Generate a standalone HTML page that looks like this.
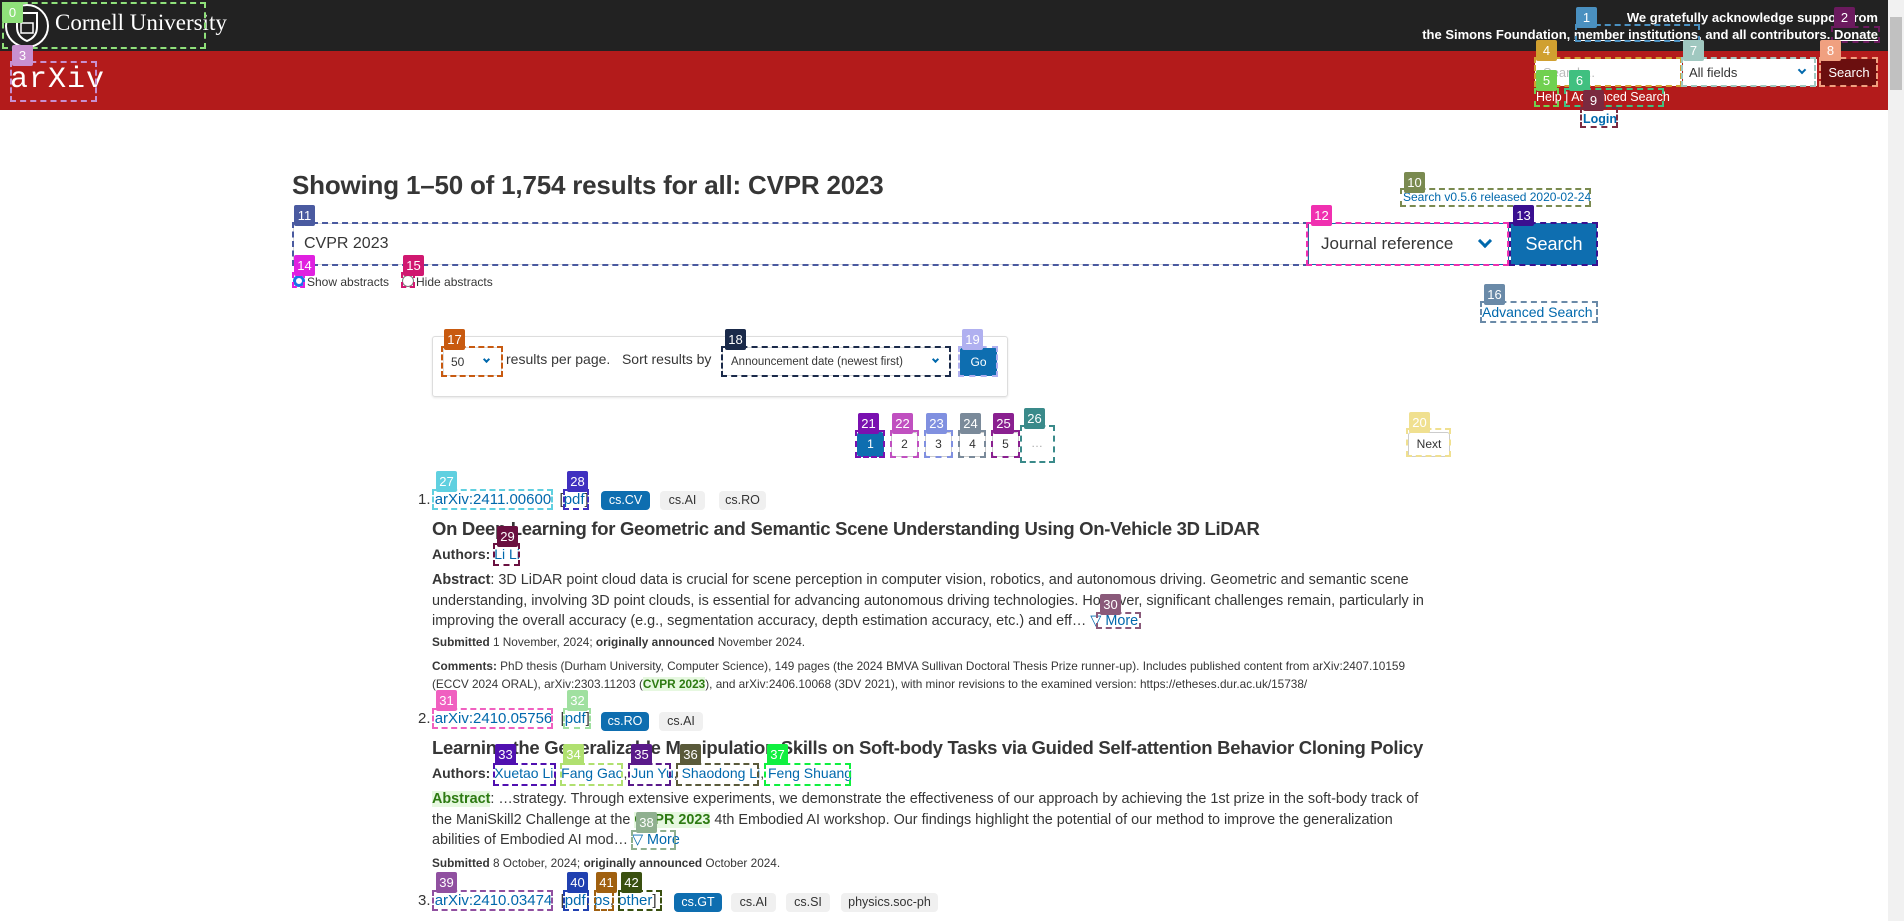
<!DOCTYPE html>
<html><head><meta charset="utf-8"><style>
*{margin:0;padding:0;box-sizing:border-box}
body{width:1904px;height:921px;overflow:hidden;position:relative;background:#fff;font-family:"Liberation Sans",Arial,sans-serif;color:#363636}
.a{position:absolute;white-space:nowrap}
.lk{color:#0068ac}
.b{position:absolute;border:2px dashed}
.l{position:absolute;width:21px;height:21px;color:#fff;font-size:13px;text-align:center;line-height:21px;border-radius:2px}
.tag{position:absolute;height:19px;border-radius:4px;font-size:12.5px;line-height:19px;text-align:center;background:#f0f0f0;color:#333}
.tag.p{background:#0e6eb0;color:#fff}
.pg{position:absolute;top:432px;height:25px;border:1px solid #ccc;border-radius:3px;font-size:12px;text-align:center;line-height:23px;color:#333;background:#fff}
.hl{background:#e6f8e0;color:#2d7a12;font-weight:bold}
.chev{position:absolute;display:inline-block;width:6px;height:6px;border-right:2px solid #0068ac;border-bottom:2px solid #0068ac;transform:rotate(45deg)}
</style></head><body>
<!-- header -->
<div class="a" style="left:0;top:0;width:1888px;height:51px;background:#222"></div>
<div class="a" style="left:0;top:51px;width:1888px;height:59px;background:#b31b1b"></div>
<svg class="a" style="left:4px;top:3px" width="46" height="46" viewBox="0 0 46 46"><circle cx="23" cy="23" r="21" fill="none" stroke="#fff" stroke-width="2"/><path d="M13 10h20v14c0 8-5 12-10 14-5-2-10-6-10-14z" fill="none" stroke="#fff" stroke-width="2"/><rect x="17" y="20" width="12" height="10" fill="none" stroke="#fff" stroke-width="1.5"/></svg>
<div class="a" style="left:55px;top:10px;font-family:'Liberation Serif',serif;font-size:23px;color:#fff">Cornell University</div>
<div class="a" style="left:10px;top:63px;font-family:'Liberation Mono',monospace;font-size:30px;color:#fff;letter-spacing:1px">arXiv</div>
<div class="a" style="right:26px;top:9px;font-size:13px;font-weight:bold;color:#fff;text-align:right;line-height:17px">We gratefully acknowledge support from<br>the Simons Foundation, <u>member institutions</u>, and all contributors. <u>Donate</u></div>
<div class="a" style="left:1535px;top:59px;width:147px;height:27px;background:#fff;border-radius:2px;font-size:13px;color:#bbb;padding:6px 8px">Search...</div>
<div class="a" style="left:1683px;top:59px;width:134px;height:27px;background:#fff;font-size:13px;color:#333;padding:6px 6px">All fields<span class="chev" style="right:12px;top:8px"></span></div>
<div class="a" style="left:1821px;top:59px;width:56px;height:27px;background:#6b0f0f;color:#fff;font-size:13px;text-align:center;line-height:27px">Search</div>
<div class="a" style="left:1536px;top:90px;font-size:12.5px;color:#fff">Help | Advanced Search</div>
<div class="a lk" style="left:1583px;top:112px;font-size:12.5px;font-weight:bold">Login</div>
<!-- scrollbar -->
<div class="a" style="left:1888px;top:0;width:16px;height:921px;background:#f1f1f1"></div>
<div class="a" style="left:1890px;top:17px;width:12px;height:73px;background:#c1c1c1"></div>
<!-- heading -->
<div class="a" style="left:292px;top:170px;font-size:26px;font-weight:bold;color:#363636;letter-spacing:-0.2px">Showing 1–50 of 1,754 results for all: CVPR 2023</div>
<div class="a lk" style="left:1403px;top:190px;font-size:12px">Search v0.5.6 released 2020-02-24</div>
<div class="a" style="left:293px;top:223px;width:1015px;height:42px;border:1px solid #dbdbdb;font-size:16px;padding:11px 10px;color:#363636">CVPR 2023</div>
<div class="a" style="left:1308px;top:223px;width:201px;height:42px;border:1px solid #0e6eb0;font-size:17px;padding:10px 12px">Journal reference<span class="chev" style="right:18px;top:12px;width:10px;height:10px;border-width:3px"></span></div>
<div class="a" style="left:1511px;top:223px;width:86px;height:42px;background:#0e6eb0;color:#fff;font-size:18px;text-align:center;line-height:42px">Search</div>
<div class="a" style="left:293px;top:275px;width:12px;height:12px;border-radius:50%;border:3px solid #1a73e8;background:#fff"></div>
<div class="a" style="left:307px;top:275px;font-size:12px">Show abstracts</div>
<div class="a" style="left:402px;top:275px;width:12px;height:12px;border-radius:50%;border:1px solid #777"></div>
<div class="a" style="left:416px;top:275px;font-size:12px">Hide abstracts</div>
<div class="a lk" style="left:1482px;top:304px;font-size:14px">Advanced Search</div>
<!-- sort box -->
<div class="a" style="left:432px;top:336px;width:576px;height:61px;border:1px solid #ddd;border-radius:3px;box-shadow:0 1px 2px rgba(0,0,0,.1)"></div>
<div class="a" style="left:443px;top:347px;width:59px;height:29px;border:1px solid #ddd;font-size:12px;padding:7px 7px">50<span class="chev" style="right:12px;top:9px;width:5px;height:5px"></span></div>
<div class="a" style="left:506px;top:351px;font-size:14px">results per page.&nbsp;&nbsp; Sort results by</div>
<div class="a" style="left:722px;top:347px;width:229px;height:29px;border:1px solid #ddd;font-size:11.5px;padding:8px 8px">Announcement date (newest first)<span class="chev" style="right:12px;top:9px;width:5px;height:5px"></span></div>
<div class="a" style="left:960px;top:348px;width:37px;height:28px;background:#0e6eb0;color:#fff;font-size:12px;text-align:center;line-height:28px;border-radius:2px">Go</div>
<!-- pagination -->
<div class="pg" style="left:857px;width:27px;background:#0e6eb0;color:#fff;border-color:#0e6eb0">1</div>
<div class="pg" style="left:891px;width:27px">2</div>
<div class="pg" style="left:925px;width:27px">3</div>
<div class="pg" style="left:959px;width:27px">4</div>
<div class="pg" style="left:992px;width:27px">5</div>
<div class="a" style="left:1031px;top:436px;font-size:12px;color:#aaa">…</div>
<div class="pg" style="left:1408px;width:42px">Next</div>
<!-- result 1 -->
<div class="a" style="left:418px;top:491px;font-size:15px">1. <span class="lk">arXiv:2411.00600</span> &nbsp;[<span class="lk">pdf</span>]</div>
<div class="tag p" style="left:601px;top:491px;width:49px">cs.CV</div>
<div class="tag" style="left:660px;top:491px;width:45px">cs.AI</div>
<div class="tag" style="left:719px;top:491px;width:47px">cs.RO</div>
<div class="a" style="left:432px;top:518px;font-size:18.5px;font-weight:bold;letter-spacing:-0.3px">On Deep Learning for Geometric and Semantic Scene Understanding Using On-Vehicle 3D LiDAR</div>
<div class="a" style="left:432px;top:546px;font-size:14px"><b>Authors:</b> <span class="lk">Li Li</span></div>
<div class="a" style="left:432px;top:570px;font-size:14.4px;line-height:20.5px"><b>Abstract</b>: 3D LiDAR point cloud data is crucial for scene perception in computer vision, robotics, and autonomous driving. Geometric and semantic scene<br>understanding, involving 3D point clouds, is essential for advancing autonomous driving technologies. However, significant challenges remain, particularly in<br>improving the overall accuracy (e.g., segmentation accuracy, depth estimation accuracy, etc.) and eff… <span class="lk">▽ More</span></div>
<div class="a" style="left:432px;top:635px;font-size:11.8px"><b>Submitted</b> 1 November, 2024; <b>originally announced</b> November 2024.</div>
<div class="a" style="left:432px;top:657px;font-size:11.8px;line-height:18px"><b>Comments:</b> PhD thesis (Durham University, Computer Science), 149 pages (the 2024 BMVA Sullivan Doctoral Thesis Prize runner-up). Includes published content from arXiv:2407.10159<br>(ECCV 2024 ORAL), arXiv:2303.11203 (<span class="hl">CVPR 2023</span>), and arXiv:2406.10068 (3DV 2021), with minor revisions to the examined version: https://etheses.dur.ac.uk/15738/</div>
<!-- result 2 -->
<div class="a" style="left:418px;top:710px;font-size:15px">2. <span class="lk">arXiv:2410.05756</span> &nbsp;[<span class="lk">pdf</span>]</div>
<div class="tag p" style="left:601px;top:712px;width:48px">cs.RO</div>
<div class="tag" style="left:659px;top:712px;width:44px">cs.AI</div>
<div class="a" style="left:432px;top:737px;font-size:18.5px;font-weight:bold;letter-spacing:-0.3px">Learning the Generalizable Manipulation Skills on Soft-body Tasks via Guided Self-attention Behavior Cloning Policy</div>
<div class="a" style="left:432px;top:765px;font-size:14px"><b>Authors:</b> <span class="lk">Xuetao Li</span>, <span class="lk">Fang Gao</span>, <span class="lk">Jun Yu</span>, <span class="lk">Shaodong Li</span>, <span class="lk">Feng Shuang</span></div>
<div class="a" style="left:432px;top:789px;font-size:14.4px;line-height:20.5px"><span class="hl">Abstract</span>: …strategy. Through extensive experiments, we demonstrate the effectiveness of our approach by achieving the 1st prize in the soft-body track of<br>the ManiSkill2 Challenge at the <span class="hl">CVPR 2023</span> 4th Embodied AI workshop. Our findings highlight the potential of our method to improve the generalization<br>abilities of Embodied AI mod… <span class="lk">▽ More</span></div>
<div class="a" style="left:432px;top:856px;font-size:11.8px"><b>Submitted</b> 8 October, 2024; <b>originally announced</b> October 2024.</div>
<!-- result 3 -->
<div class="a" style="left:418px;top:892px;font-size:15px">3. <span class="lk">arXiv:2410.03474</span> &nbsp;[<span class="lk">pdf</span>, <span class="lk">ps</span>, <span class="lk">other</span>]</div>
<div class="tag p" style="left:674px;top:893px;width:48px">cs.GT</div>
<div class="tag" style="left:731px;top:893px;width:45px">cs.AI</div>
<div class="tag" style="left:786px;top:893px;width:44px">cs.SI</div>
<div class="tag" style="left:841px;top:893px;width:97px">physics.soc-ph</div>

<!-- overlay boxes -->
<div class="b" style="left:2px;top:2px;width:204px;height:47px;border-color:#8fe07a"></div><div class="l" style="left:2px;top:2px;background:#8fe07a">0</div>
<div class="b" style="left:1575px;top:24px;width:125px;height:18px;border-color:#4a90c0"></div><div class="l" style="left:1576px;top:7px;background:#4a90c0">1</div>
<div class="b" style="left:1831px;top:26px;width:49px;height:17px;border-color:#6b1a5e"></div><div class="l" style="left:1834px;top:7px;background:#6b1a5e">2</div>
<div class="b" style="left:10px;top:61px;width:87px;height:41px;border-color:#c890d0"></div><div class="l" style="left:12px;top:45px;background:#c890d0">3</div>
<div class="b" style="left:1534px;top:57px;width:148px;height:30px;border-color:#d0a030"></div><div class="l" style="left:1536px;top:40px;background:#d0a030">4</div>
<div class="b" style="left:1534px;top:88px;width:25px;height:19px;border-color:#70d050"></div><div class="l" style="left:1536px;top:70px;background:#70d050">5</div>
<div class="b" style="left:1564px;top:88px;width:100px;height:19px;border-color:#40c080"></div><div class="l" style="left:1569px;top:70px;background:#40c080">6</div>
<div class="b" style="left:1681px;top:57px;width:135px;height:30px;border-color:#a0c8c0"></div><div class="l" style="left:1683px;top:40px;background:#a0c8c0">7</div>
<div class="b" style="left:1819px;top:57px;width:59px;height:30px;border-color:#f0a080"></div><div class="l" style="left:1820px;top:40px;background:#f0a080">8</div>
<div class="b" style="left:1580px;top:107px;width:38px;height:21px;border-color:#7a2a40"></div><div class="l" style="left:1583px;top:90px;background:#7a2a40">9</div>
<div class="b" style="left:1400px;top:188px;width:191px;height:19px;border-color:#7a8a50"></div><div class="l" style="left:1404px;top:172px;background:#7a8a50">10</div>
<div class="b" style="left:292px;top:222px;width:1017px;height:44px;border-color:#4a5aa0"></div><div class="l" style="left:294px;top:205px;background:#4a5aa0">11</div>
<div class="b" style="left:1306px;top:222px;width:203px;height:44px;border-color:#f030b0"></div><div class="l" style="left:1311px;top:205px;background:#f030b0">12</div>
<div class="b" style="left:1509px;top:222px;width:89px;height:44px;border-color:#3a1090"></div><div class="l" style="left:1513px;top:205px;background:#3a1090">13</div>
<div class="b" style="left:292px;top:272px;width:13px;height:16px;border-color:#e020e0"></div><div class="l" style="left:294px;top:255px;background:#e020e0">14</div>
<div class="b" style="left:401px;top:272px;width:14px;height:16px;border-color:#d01870"></div><div class="l" style="left:403px;top:255px;background:#d01870">15</div>
<div class="b" style="left:1480px;top:301px;width:118px;height:22px;border-color:#6a8aa8"></div><div class="l" style="left:1484px;top:284px;background:#6a8aa8">16</div>
<div class="b" style="left:441px;top:346px;width:62px;height:31px;border-color:#c85a10"></div><div class="l" style="left:444px;top:329px;background:#c85a10">17</div>
<div class="b" style="left:721px;top:346px;width:230px;height:31px;border-color:#1a2a4a"></div><div class="l" style="left:725px;top:329px;background:#1a2a4a">18</div>
<div class="b" style="left:958px;top:346px;width:40px;height:31px;border-color:#b0b0f0"></div><div class="l" style="left:962px;top:329px;background:#b0b0f0">19</div>
<div class="b" style="left:1406px;top:428px;width:45px;height:29px;border-color:#f0e090"></div><div class="l" style="left:1409px;top:412px;background:#f0e090">20</div>
<div class="b" style="left:855px;top:430px;width:30px;height:28px;border-color:#7a10b0"></div><div class="l" style="left:858px;top:413px;background:#7a10b0">21</div>
<div class="b" style="left:890px;top:430px;width:29px;height:28px;border-color:#c050c0"></div><div class="l" style="left:892px;top:413px;background:#c050c0">22</div>
<div class="b" style="left:924px;top:430px;width:29px;height:28px;border-color:#8090e0"></div><div class="l" style="left:926px;top:413px;background:#8090e0">23</div>
<div class="b" style="left:958px;top:430px;width:28px;height:28px;border-color:#7a8a9a"></div><div class="l" style="left:960px;top:413px;background:#7a8a9a">24</div>
<div class="b" style="left:991px;top:430px;width:29px;height:28px;border-color:#8a2090"></div><div class="l" style="left:993px;top:413px;background:#8a2090">25</div>
<div class="b" style="left:1020px;top:425px;width:35px;height:38px;border-color:#3a8a8a"></div><div class="l" style="left:1024px;top:408px;background:#3a8a8a">26</div>
<div class="b" style="left:432px;top:489px;width:121px;height:21px;border-color:#60d0e0"></div><div class="l" style="left:436px;top:471px;background:#60d0e0">27</div>
<div class="b" style="left:563px;top:489px;width:26px;height:21px;border-color:#4030c0"></div><div class="l" style="left:567px;top:471px;background:#4030c0">28</div>
<div class="b" style="left:493px;top:543px;width:27px;height:23px;border-color:#6a1040"></div><div class="l" style="left:497px;top:526px;background:#6a1040">29</div>
<div class="b" style="left:1096px;top:612px;width:45px;height:17px;border-color:#8a5a7a"></div><div class="l" style="left:1100px;top:594px;background:#8a5a7a">30</div>
<div class="b" style="left:432px;top:708px;width:121px;height:21px;border-color:#f060c0"></div><div class="l" style="left:436px;top:690px;background:#f060c0">31</div>
<div class="b" style="left:563px;top:708px;width:28px;height:21px;border-color:#a0e0a0"></div><div class="l" style="left:567px;top:690px;background:#a0e0a0">32</div>
<div class="b" style="left:493px;top:763px;width:63px;height:23px;border-color:#5010b0"></div><div class="l" style="left:495px;top:744px;background:#5010b0">33</div>
<div class="b" style="left:560px;top:763px;width:63px;height:23px;border-color:#b0e070"></div><div class="l" style="left:563px;top:744px;background:#b0e070">34</div>
<div class="b" style="left:628px;top:763px;width:43px;height:23px;border-color:#5a1a8a"></div><div class="l" style="left:631px;top:744px;background:#5a1a8a">35</div>
<div class="b" style="left:676px;top:763px;width:83px;height:23px;border-color:#5a5a3a"></div><div class="l" style="left:680px;top:744px;background:#5a5a3a">36</div>
<div class="b" style="left:764px;top:763px;width:87px;height:23px;border-color:#10f040"></div><div class="l" style="left:767px;top:744px;background:#10f040">37</div>
<div class="b" style="left:631px;top:830px;width:45px;height:20px;border-color:#90b090"></div><div class="l" style="left:636px;top:812px;background:#90b090">38</div>
<div class="b" style="left:432px;top:890px;width:121px;height:21px;border-color:#9050a0"></div><div class="l" style="left:436px;top:872px;background:#9050a0">39</div>
<div class="b" style="left:563px;top:890px;width:26px;height:21px;border-color:#2040b0"></div><div class="l" style="left:567px;top:872px;background:#2040b0">40</div>
<div class="b" style="left:594px;top:890px;width:20px;height:21px;border-color:#a06010"></div><div class="l" style="left:596px;top:872px;background:#a06010">41</div>
<div class="b" style="left:618px;top:890px;width:44px;height:21px;border-color:#3a5010"></div><div class="l" style="left:621px;top:872px;background:#3a5010">42</div>
</body></html>
